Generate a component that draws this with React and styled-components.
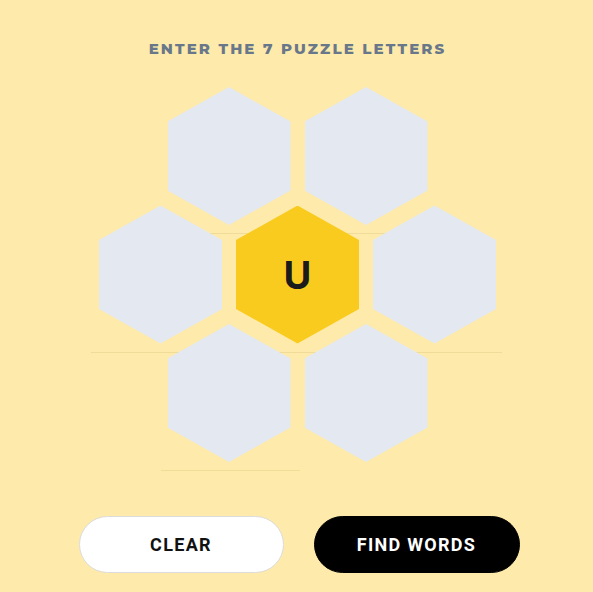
import React from "react";
import styled, { createGlobalStyle } from "styled-components";

const Global = createGlobalStyle`
  html, body { margin: 0; padding: 0; background: #feeaab; }
  body { font-family: "Inter", "Roboto", sans-serif; }
`;

const Page = styled.div`
  width: 593px;
  height: 592px;
  box-sizing: border-box;
  padding: 39px 0 0 2px;
  display: flex;
  flex-direction: column;
  align-items: center;
  background: #feeaab;
`;

const Title = styled.h1`
  margin: 0;
  font-family: "Montserrat", "Inter", sans-serif;
  font-weight: 800;
  font-size: 15px;
  line-height: 20px;
  letter-spacing: 2.1px;
  color: #687789;
  text-transform: uppercase;
`;

const Comb = styled.div`
  margin-top: 28px;
  display: flex;
  flex-direction: column;
  align-items: center;
`;

const Row = styled.div`
  position: relative;
  display: flex;
  gap: 14px;
  margin-top: ${(p) => (p.$first ? "0" : "-19.5px")};
  &::before {
    content: "";
    position: absolute;
    top: 146px;
    left: ${(p) => p.$lineLeft}px;
    width: ${(p) => p.$lineWidth}px;
    height: 1px;
    background: rgba(190, 160, 80, 0.2);
  }
`;

const Hex = styled.button`
  position: relative;
  width: 123px;
  height: 138px;
  border: none;
  padding: 0;
  margin: 0;
  clip-path: polygon(50% 0, 100% 25%, 100% 75%, 50% 100%, 0 75%, 0 25%);
  background: ${(p) => (p.$center ? "#f9cb1f" : "#e3e8f1")};
  color: #1b1b1b;
  font-family: "Inter", "Roboto", sans-serif;
  font-weight: 700;
  font-size: 38px;
  display: flex;
  align-items: center;
  justify-content: center;
  cursor: pointer;
`;

const Actions = styled.div`
  margin: 54px 0 0 3px;
  display: flex;
  gap: 30px;
`;

const Pill = styled.button`
  width: ${(p) => (p.$dark ? "206px" : "205px")};
  height: 57px;
  border-radius: 29px;
  box-sizing: border-box;
  border: 1px solid ${(p) => (p.$dark ? "#000" : "#dcdcdc")};
  background: ${(p) => (p.$dark ? "#000" : "#fff")};
  color: ${(p) => (p.$dark ? "#fff" : "#111")};
  font-family: "Roboto", "Inter", sans-serif;
  font-weight: 700;
  font-size: 18px;
  letter-spacing: 1.3px;
  cursor: pointer;
`;

export default function App() {
  return (
    <>
      <Global />
      <Page>
        <Title>Enter the 7 puzzle letters</Title>
        <Comb>
          <Row $first $lineLeft={42} $lineWidth={175}>
            <Hex />
            <Hex />
          </Row>
          <Row $lineLeft={-8} $lineWidth={411}>
            <Hex />
            <Hex $center>U</Hex>
            <Hex />
          </Row>
          <Row $lineLeft={-7} $lineWidth={139}>
            <Hex />
            <Hex />
          </Row>
        </Comb>
        <Actions>
          <Pill>CLEAR</Pill>
          <Pill $dark>FIND WORDS</Pill>
        </Actions>
      </Page>
    </>
  );
}
